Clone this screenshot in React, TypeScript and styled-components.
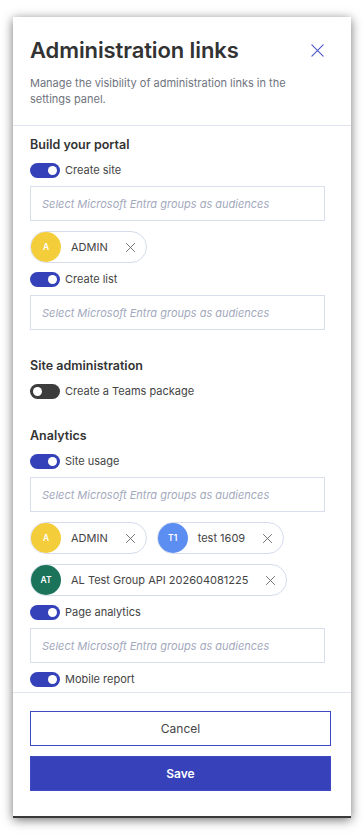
import React from "react";
import styled, { createGlobalStyle } from "styled-components";

const Global = createGlobalStyle`
  html, body { margin: 0; padding: 0; background: #ffffff; }
  body { font-family: Inter, "Noto Sans", sans-serif; }
  * { box-sizing: border-box; }
`;

const Panel = styled.div`
  margin: 17px 13px 19px 13px;
  width: 338px;
  height: 801px;
  background: #fff;
  display: flex;
  flex-direction: column;
  box-shadow: 0 2px 10px rgba(0, 0, 0, 0.55);
  border-bottom: 2px solid #3a3a3a;
  overflow: hidden;
`;

const Header = styled.div`
  padding: 20px 26px 18px 17px;
  border-bottom: 1px solid #dfe4f0;
  flex: none;
`;

const TitleRow = styled.div`
  display: flex;
  align-items: center;
  justify-content: space-between;
`;

const Title = styled.h1`
  margin: 0;
  font-size: 22px;
  line-height: 27px;
  font-weight: 600;
  color: #333;
  letter-spacing: -0.1px;
`;

const CloseBtn = styled.button`
  border: none;
  background: none;
  padding: 0;
  width: 16px;
  height: 16px;
  display: flex;
  align-items: center;
  justify-content: center;
`;

const Desc = styled.p`
  margin: 11px 0 0;
  font-size: 11px;
  line-height: 16px;
  color: #6f7480;
`;

const Body = styled.div`
  flex: 1;
  overflow: hidden;
  padding: 10px 26px 0 17px;
  display: flex;
  flex-direction: column;
  gap: 27px;
`;

const Section = styled.div`
  display: flex;
  flex-direction: column;
  gap: 7px;
`;

const SectionTitle = styled.h2`
  margin: 0;
  font-size: 12.5px;
  line-height: 18px;
  font-weight: 600;
  color: #333;
`;

const ToggleRow = styled.label`
  display: flex;
  align-items: center;
  gap: 5px;
  height: 18px;
  font-size: 11px;
  color: #444;
`;

const Track = styled.span<{ $on: boolean }>`
  width: 30px;
  height: 15px;
  border-radius: 8px;
  background: ${(p) => (p.$on ? "#3541b9" : "#3c3c3c")};
  position: relative;
  flex: none;
  &::after {
    content: "";
    position: absolute;
    top: 3px;
    left: ${(p) => (p.$on ? "18px" : "3px")};
    width: 9px;
    height: 9px;
    border-radius: 50%;
    background: #fff;
  }
`;

const Input = styled.div`
  height: 35px;
  border: 1px solid #d9deec;
  display: flex;
  align-items: center;
  padding: 0 11px;
  font-size: 11px;
  font-style: italic;
  color: #a3a9bd;
`;

const ChipList = styled.div`
  display: flex;
  flex-wrap: wrap;
  gap: 10px;
  margin-top: 3px;
`;

const Chip = styled.div`
  height: 32px;
  border: 1px solid #d6dcec;
  border-radius: 16px;
  display: flex;
  align-items: center;
  padding: 0 10px 0 0;
  font-size: 11px;
  color: #444;
`;

const Avatar = styled.span<{ $bg: string }>`
  width: 30px;
  height: 30px;
  border-radius: 50%;
  background: ${(p) => p.$bg};
  color: #fff;
  font-size: 8.5px;
  font-weight: 600;
  display: flex;
  align-items: center;
  justify-content: center;
  flex: none;
`;

const ChipText = styled.span`
  margin: 0 17px 0 10px;
  white-space: nowrap;
`;

const Footer = styled.div`
  flex: none;
  border-top: 1px solid #dfe4f0;
  padding: 18px 20px 25px 17px;
  display: flex;
  flex-direction: column;
  gap: 10px;
`;

const Button = styled.button<{ $primary?: boolean }>`
  height: 35px;
  width: 100%;
  font-family: Inter, sans-serif;
  font-size: 12px;
  font-weight: ${(p) => (p.$primary ? 600 : 400)};
  color: ${(p) => (p.$primary ? "#fff" : "#444")};
  background: ${(p) => (p.$primary ? "#3742ba" : "#fff")};
  border: 1px solid #4049c4;
`;

const XIcon = ({ size, color, w }: { size: number; color: string; w: number }) => (
  <svg width={size} height={size} viewBox="0 0 16 16">
    <path d="M2 2L14 14M14 2L2 14" stroke={color} strokeWidth={w} strokeLinecap="round" />
  </svg>
);

const Toggle = ({ on, label }: { on: boolean; label: string }) => (
  <ToggleRow>
    <Track $on={on} />
    {label}
  </ToggleRow>
);

const PLACEHOLDER = "Select Microsoft Entra groups as audiences";

const GroupChip = ({ initials, name, bg }: { initials: string; name: string; bg: string }) => (
  <Chip>
    <Avatar $bg={bg}>{initials}</Avatar>
    <ChipText>{name}</ChipText>
    <XIcon size={11} color="#666" w={1.3} />
  </Chip>
);

export default function App() {
  return (
    <>
      <Global />
      <Panel>
        <Header>
          <TitleRow>
            <Title>Administration links</Title>
            <CloseBtn aria-label="Close">
              <XIcon size={15} color="#4a55c9" w={1.2} />
            </CloseBtn>
          </TitleRow>
          <Desc>Manage the visibility of administration links in the settings panel.</Desc>
        </Header>
        <Body>
          <Section>
            <SectionTitle>Build your portal</SectionTitle>
            <Toggle on label="Create site" />
            <Input>{PLACEHOLDER}</Input>
            <ChipList>
              <GroupChip initials="A" name="ADMIN" bg="#f4cd3b" />
            </ChipList>
            <Toggle on label="Create list" />
            <Input>{PLACEHOLDER}</Input>
          </Section>
          <Section>
            <SectionTitle>Site administration</SectionTitle>
            <Toggle on={false} label="Create a Teams package" />
          </Section>
          <Section>
            <SectionTitle>Analytics</SectionTitle>
            <Toggle on label="Site usage" />
            <Input>{PLACEHOLDER}</Input>
            <ChipList>
              <GroupChip initials="A" name="ADMIN" bg="#f4cd3b" />
              <GroupChip initials="T1" name="test 1609" bg="#5b8ef0" />
              <GroupChip initials="AT" name="AL Test Group API 202604081225" bg="#1b735a" />
            </ChipList>
            <Toggle on label="Page analytics" />
            <Input>{PLACEHOLDER}</Input>
            <Toggle on label="Mobile report" />
          </Section>
        </Body>
        <Footer>
          <Button>Cancel</Button>
          <Button $primary>Save</Button>
        </Footer>
      </Panel>
    </>
  );
}
